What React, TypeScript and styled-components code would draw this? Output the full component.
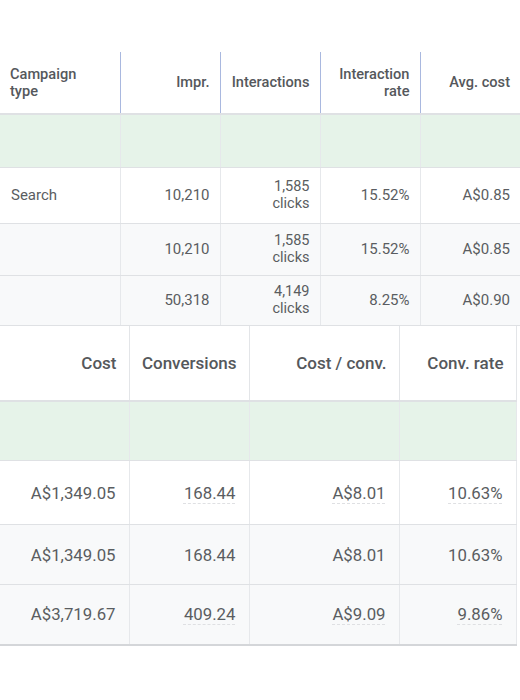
import React from "react";
import styled, { createGlobalStyle } from "styled-components";

const Global = createGlobalStyle`
  html, body { margin: 0; padding: 0; background: #ffffff; }
  body { font-family: Roboto, "Noto Sans", Arial, sans-serif; }
`;

const Page = styled.div`
  width: 520px;
  height: 700px;
  padding-top: 52px;
  box-sizing: border-box;
  overflow: hidden;
  display: flex;
  flex-direction: column;
`;

const Table = styled.table<{ $w: number; $big?: boolean }>`
  width: ${(p) => p.$w}px;
  border-collapse: collapse;
  table-layout: fixed;
  font-size: ${(p) => (p.$big ? 16.8 : 15)}px;
  ${(p) => (p.$big ? "border-right: 1px solid #dadce0; border-bottom: 2px solid #d4d6d9;" : "")}
`;

const HeadCell = styled.th<{ $h: number; $left?: boolean; $blue?: boolean; $big?: boolean }>`
  height: ${(p) => p.$h}px;
  padding: 0 ${(p) => (p.$big ? 12 : 10)}px 0 ${(p) => (p.$big ? 12 : 10)}px;
  text-align: ${(p) => (p.$left ? "left" : "right")};
  vertical-align: middle;
  font-weight: 500;
  font-size: ${(p) => (p.$big ? 17 : 14.6)}px;
  line-height: ${(p) => (p.$big ? 20 : 17)}px;
  color: #55585c;
  border-right: 1px solid ${(p) => (p.$blue ? "#a9b8df" : "#e3e5e8")};
  border-bottom: 2px solid #dfe1e4;
  box-sizing: border-box;
  &:last-child { border-right: ${(p) => (p.$big ? "1px solid #e3e5e8" : "none")}; }
`;

const Row = styled.tr<{ $bg: string; $h: number }>`
  background: ${(p) => p.$bg};
  height: ${(p) => p.$h}px;
`;

const Cell = styled.td<{ $left?: boolean; $big?: boolean }>`
  padding: 0 ${(p) => (p.$big ? 13 : 10)}px 0 ${(p) => (p.$big ? 12 : 11)}px;
  text-align: ${(p) => (p.$left ? "left" : "right")};
  vertical-align: middle;
  color: #5a5d61;
  line-height: 16px;
  border-right: 1px solid #e6e8eb;
  border-bottom: 1px solid #dfe1e4;
  &:last-child { border-right: ${(p) => (p.$big ? "1px solid #e6e8eb" : "none")}; }
`;

const Dotted = styled.span`
  text-decoration: underline dashed #dfe0e3;
  text-decoration-thickness: 1px;
  text-underline-offset: 4px;
`;

const Two = styled.span`
  display: inline-block;
  text-align: right;
  font-size: 14.5px;
  line-height: 17px;
`;

const topHeads = ["Campaign type", "Impr.", "Interactions", "Interaction rate", "Avg. cost"];
const topWidths = [120, 100, 100, 100, 100];
const topRows = [
  { bg: "#ffffff", h: 56, c: ["Search", "10,210", ["1,585", "clicks"], "15.52%", "A$0.85"] },
  { bg: "#f8f9fa", h: 52, c: ["", "10,210", ["1,585", "clicks"], "15.52%", "A$0.85"] },
  { bg: "#f8f9fa", h: 50, c: ["", "50,318", ["4,149", "clicks"], "8.25%", "A$0.90"] },
];

const botHeads = ["Cost", "Conversions", "Cost / conv.", "Conv. rate"];
const botWidths = [129, 120, 150, 117];
const botRows = [
  { bg: "#ffffff", h: 64, dot: true, c: ["A$1,349.05", "168.44", "A$8.01", "10.63%"] },
  { bg: "#f8f9fa", h: 60, dot: false, c: ["A$1,349.05", "168.44", "A$8.01", "10.63%"] },
  { bg: "#f8f9fa", h: 60, dot: true, c: ["A$3,719.67", "409.24", "A$9.09", "9.86%"] },
];

export default function App() {
  return (
    <>
      <Global />
      <Page>
        <Table $w={520}>
          <colgroup>
            {topWidths.map((w, i) => (
              <col key={i} style={{ width: w }} />
            ))}
          </colgroup>
          <thead>
            <tr>
              {topHeads.map((h, i) => (
                <HeadCell key={h} $h={62} $left={i === 0} $blue>
                  {h === "Campaign type" ? (
                    <>Campaign<br />type</>
                  ) : h === "Interaction rate" ? (
                    <>Interaction<br />rate</>
                  ) : (
                    h
                  )}
                </HeadCell>
              ))}
            </tr>
          </thead>
          <tbody>
            <Row $bg="#e6f3e9" $h={53}>
              {topHeads.map((h) => (
                <Cell key={h} />
              ))}
            </Row>
            {topRows.map((r, ri) => (
              <Row key={ri} $bg={r.bg} $h={r.h}>
                {r.c.map((v, i) => (
                  <Cell key={i} $left={i === 0}>
                    {Array.isArray(v) ? (
                      <Two>
                        {v[0]}
                        <br />
                        {v[1]}
                      </Two>
                    ) : (
                      v
                    )}
                  </Cell>
                ))}
              </Row>
            ))}
          </tbody>
        </Table>
        <Table $w={516} $big>
          <colgroup>
            {botWidths.map((w, i) => (
              <col key={i} style={{ width: w }} />
            ))}
          </colgroup>
          <thead>
            <tr>
              {botHeads.map((h) => (
                <HeadCell key={h} $h={75} $big>
                  {h}
                </HeadCell>
              ))}
            </tr>
          </thead>
          <tbody>
            <Row $bg="#e6f3e9" $h={60}>
              {botHeads.map((h) => (
                <Cell key={h} $big />
              ))}
            </Row>
            {botRows.map((r, ri) => (
              <Row key={ri} $bg={r.bg} $h={r.h}>
                {r.c.map((v, i) => (
                  <Cell key={i} $big>
                    {r.dot && i > 0 ? <Dotted>{v}</Dotted> : v}
                  </Cell>
                ))}
              </Row>
            ))}
          </tbody>
        </Table>
      </Page>
    </>
  );
}
